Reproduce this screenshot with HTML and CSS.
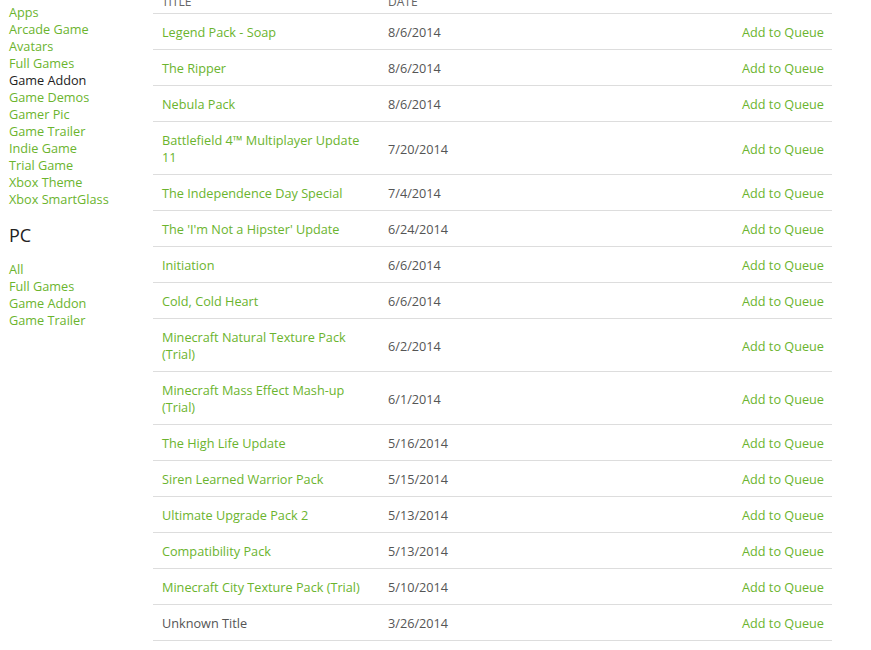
FILE: index.html
```html
<!DOCTYPE html>
<html lang="en">
<head>
    <meta charset="UTF-8">
    <title>Marketplace - Game Addon</title>
    <link rel="stylesheet" href="styles.css">
</head>
<body>

<div class="page">
    <div class="sidebar">
        <ul class="nav">
            <li><a href="#">All</a></li>
            <li><a href="#">Apps</a></li>
            <li><a href="#">Arcade Game</a></li>
            <li><a href="#">Avatars</a></li>
            <li><a href="#">Full Games</a></li>
            <li><a href="#" class="active">Game Addon</a></li>
            <li><a href="#">Game Demos</a></li>
            <li><a href="#">Gamer Pic</a></li>
            <li><a href="#">Game Trailer</a></li>
            <li><a href="#">Indie Game</a></li>
            <li><a href="#">Trial Game</a></li>
            <li><a href="#">Xbox Theme</a></li>
            <li><a href="#">Xbox SmartGlass</a></li>
        </ul>
        <h2>PC</h2>
        <ul class="nav">
            <li><a href="#">All</a></li>
            <li><a href="#">Full Games</a></li>
            <li><a href="#">Game Addon</a></li>
            <li><a href="#">Game Trailer</a></li>
        </ul>
    </div>

    <table class="items">
        <thead>
            <tr><th class="col-title">Title</th><th class="col-date">Date</th><th></th></tr>
        </thead>
        <tbody>
            <tr><td><a href="#">Legend Pack - Soap</a></td><td>8/6/2014</td><td class="queue"><a href="#">Add to Queue</a></td></tr>
            <tr><td><a href="#">The Ripper</a></td><td>8/6/2014</td><td class="queue"><a href="#">Add to Queue</a></td></tr>
            <tr><td><a href="#">Nebula Pack</a></td><td>8/6/2014</td><td class="queue"><a href="#">Add to Queue</a></td></tr>
            <tr><td><a href="#">Battlefield 4™ Multiplayer Update 11</a></td><td>7/20/2014</td><td class="queue"><a href="#">Add to Queue</a></td></tr>
            <tr><td><a href="#">The Independence Day Special</a></td><td>7/4/2014</td><td class="queue"><a href="#">Add to Queue</a></td></tr>
            <tr><td><a href="#">The 'I'm Not a Hipster' Update</a></td><td>6/24/2014</td><td class="queue"><a href="#">Add to Queue</a></td></tr>
            <tr><td><a href="#">Initiation</a></td><td>6/6/2014</td><td class="queue"><a href="#">Add to Queue</a></td></tr>
            <tr><td><a href="#">Cold, Cold Heart</a></td><td>6/6/2014</td><td class="queue"><a href="#">Add to Queue</a></td></tr>
            <tr><td><a href="#">Minecraft Natural Texture Pack (Trial)</a></td><td>6/2/2014</td><td class="queue"><a href="#">Add to Queue</a></td></tr>
            <tr><td><a href="#">Minecraft Mass Effect Mash-up (Trial)</a></td><td>6/1/2014</td><td class="queue"><a href="#">Add to Queue</a></td></tr>
            <tr><td><a href="#">The High Life Update</a></td><td>5/16/2014</td><td class="queue"><a href="#">Add to Queue</a></td></tr>
            <tr><td><a href="#">Siren Learned Warrior Pack</a></td><td>5/15/2014</td><td class="queue"><a href="#">Add to Queue</a></td></tr>
            <tr><td><a href="#">Ultimate Upgrade Pack 2</a></td><td>5/13/2014</td><td class="queue"><a href="#">Add to Queue</a></td></tr>
            <tr><td><a href="#">Compatibility Pack</a></td><td>5/13/2014</td><td class="queue"><a href="#">Add to Queue</a></td></tr>
            <tr><td><a href="#">Minecraft City Texture Pack (Trial)</a></td><td>5/10/2014</td><td class="queue"><a href="#">Add to Queue</a></td></tr>
            <tr><td>Unknown Title</td><td>3/26/2014</td><td class="queue"><a href="#">Add to Queue</a></td></tr>
        </tbody>
    </table>
</div>

</body>
</html>
```

FILE: styles.css
```css
body {
    margin: 0;
    font-family: "Open Sans", "DejaVu Sans", sans-serif;
    font-size: 12.7px;
    color: #555555;
    background: #ffffff;
}
a {
    color: #6bb42e;
    text-decoration: none;
}
.page {
    display: flex;
    align-items: flex-start;
    margin-top: -13px;
    padding-left: 9px;
}
.sidebar {
    width: 144px;
    flex-shrink: 0;
}
.nav {
    list-style: none;
    margin: 0;
    padding: 0;
}
.nav li {
    line-height: 17px;
}
.nav a.active {
    color: #222222;
}
.sidebar h2 {
    font-weight: normal;
    font-size: 18px;
    color: #222222;
    margin: 15px 0 14px;
    line-height: 24px;
}
.items {
    width: 679px;
    border-collapse: collapse;
    margin-top: 6px;
}
.items th {
    text-align: left;
    font-weight: normal;
    text-transform: uppercase;
    font-size: 12px;
    color: #666666;
    padding: 0 9px 3px;
    line-height: 17px;
    border-bottom: 1px solid #dddddd;
}
.items .col-title {
    width: 208px;
}
.items .col-date {
    width: 120px;
}
.items td {
    padding: 10px 9px 8px;
    line-height: 17px;
    border-bottom: 1px solid #dddddd;
    vertical-align: middle;
}
.items td.queue {
    text-align: right;
    padding-right: 8px;
}
```
